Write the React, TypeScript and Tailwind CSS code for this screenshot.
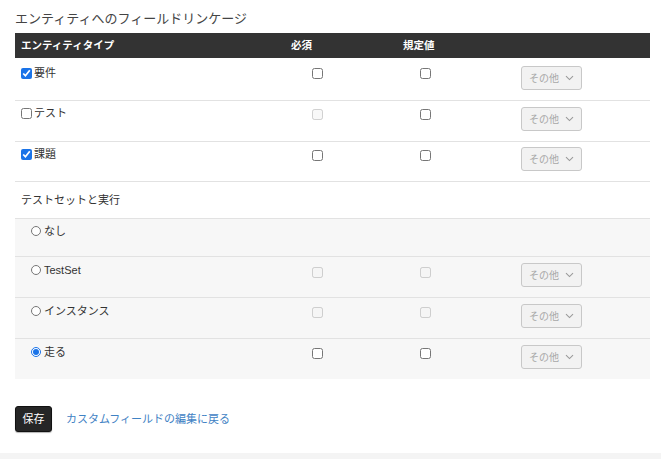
import React from "react";

const font = { fontFamily: '"Liberation Sans", "Noto Sans CJK JP", sans-serif' };

function Chevron() {
  return (
    <svg width="9" height="6" viewBox="0 0 9 6" className="ml-auto">
      <path d="M1 1.2 L4.5 4.6 L8 1.2" fill="none" stroke="#9a9a9a" strokeWidth="1.1" />
    </svg>
  );
}

function Sel() {
  return (
    <div className="flex items-center w-[61px] h-[24px] border border-[#c8c8c8] bg-[#f2f2f2] rounded-[3px] pl-[7px] pr-[7px] text-[10px] text-[#a8a8a8]">
      <span>その他</span>
      <Chevron />
    </div>
  );
}

function Cb({ checked, disabled }: { checked?: boolean; disabled?: boolean }) {
  return (
    <input
      type="checkbox"
      defaultChecked={checked}
      disabled={disabled}
      className="m-0 w-[11px] h-[11px] accent-[#1a73e8]"
    />
  );
}

function Radio({ checked }: { checked?: boolean }) {
  return (
    <input
      type="radio"
      name="ts"
      defaultChecked={checked}
      className="m-0 w-[10px] h-[10px] accent-[#1a73e8]"
    />
  );
}

type V = "on" | "off" | "dis" | null;

type RowProps = {
  label: React.ReactNode;
  c1?: V;
  c2?: V;
  sel?: boolean;
  h: string;
  lt: string;
  ct: string;
  st: string;
  gray?: boolean;
  last?: boolean;
};

function Row({ label, c1, c2, sel, h, lt, ct, st, gray, last }: RowProps) {
  const cb = (v?: V) => (v == null ? null : <Cb checked={v === "on"} disabled={v === "dis"} />);
  return (
    <div
      className={`flex ${last ? "" : "border-b border-[#e2e2e2]"} ${h} ${gray ? "bg-[#f7f7f7]" : ""}`}
    >
      <div className={`w-[270px] ${lt}`}>{label}</div>
      <div className={`w-[112px] ${ct} pl-[27px] flex items-start`}>{cb(c1)}</div>
      <div className={`w-[108px] ${ct} pl-[23px] flex items-start`}>{cb(c2)}</div>
      <div className={`flex-1 ${st} pl-[16px]`}>{sel ? <Sel /> : null}</div>
    </div>
  );
}

function CbLabel({ checked, text }: { checked?: boolean; text: string }) {
  return (
    <div className="flex items-center pl-[6px] gap-[2px] text-[11px] leading-[14px]">
      <Cb checked={checked} />
      <span>{text}</span>
    </div>
  );
}

function RadioLabel({ checked, text }: { checked?: boolean; text: string }) {
  return (
    <div className="flex items-center pl-[16px] gap-[3px] text-[11px] leading-[14px]">
      <Radio checked={checked} />
      <span>{text}</span>
    </div>
  );
}

export default function App() {
  return (
    <div style={font} className="w-[661px] h-[459px] bg-white relative text-[#333] overflow-hidden">
      <div className="px-[15px]">
        <div className="pt-[10px] h-[33px] text-[13px] leading-[18px] text-[#444]">
          エンティティへのフィールドリンケージ
        </div>
        <div className="w-[635px]">
          <div className="flex h-[25px] items-center bg-[#333333] text-white text-[10.5px] font-bold">
            <div className="w-[270px] pl-[6px]">エンティティタイプ</div>
            <div className="w-[112px] pl-[6px]">必須</div>
            <div className="w-[108px] pl-[6px]">規定値</div>
            <div className="flex-1" />
          </div>
          <Row h="h-[43px]" lt="pt-[8px]" ct="pt-[10px]" st="pt-[8px]" label={<CbLabel checked text="要件" />} c1="off" c2="off" sel />
          <Row h="h-[41px]" lt="pt-[5px]" ct="pt-[8px]" st="pt-[6px]" label={<CbLabel text="テスト" />} c1="dis" c2="off" sel />
          <Row h="h-[40px]" lt="pt-[5px]" ct="pt-[8px]" st="pt-[5px]" label={<CbLabel checked text="課題" />} c1="off" c2="off" sel />
          <div className="h-[37px] border-b border-[#e2e2e2] pl-[6px] pt-[11px] text-[11px] leading-[14px]">
            テストセットと実行
          </div>
          <Row gray h="h-[38px]" lt="pt-[5px]" ct="pt-[9px]" st="pt-[6px]" label={<RadioLabel text="なし" />} />
          <Row gray h="h-[41px]" lt="pt-[6px]" ct="pt-[10px]" st="pt-[6px]" label={<RadioLabel text="TestSet" />} c1="dis" c2="dis" sel />
          <Row gray h="h-[41px]" lt="pt-[6px]" ct="pt-[9px]" st="pt-[6px]" label={<RadioLabel text="インスタンス" />} c1="dis" c2="dis" sel />
          <Row gray last h="h-[40px]" lt="pt-[6px]" ct="pt-[9px]" st="pt-[6px]" label={<RadioLabel checked text="走る" />} c1="off" c2="off" sel />
        </div>
        <div className="flex items-center mt-[27px] gap-[14px]">
          <button className="w-[37px] h-[26px] rounded-[3px] bg-[#262626] border border-[#111] text-white text-[11px] shadow-[0_1px_1px_rgba(0,0,0,0.3)]">
            保存
          </button>
          <span className="text-[11px] text-[#3f82c4]">カスタムフィールドの編集に戻る</span>
        </div>
      </div>
      <div className="absolute left-0 right-0 bottom-0 h-[6px] bg-[#f4f4f4]" />
    </div>
  );
}
